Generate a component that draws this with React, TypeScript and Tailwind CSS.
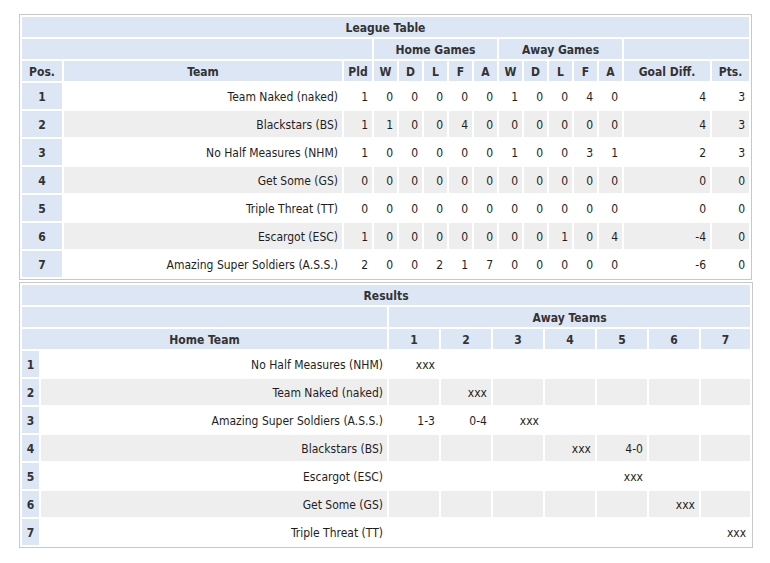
import React from "react";

const leagueRows = [
  { pos: 1, team: "Team Naked (naked)", pld: 1, home: [0, 0, 0, 0, 0], away: [1, 0, 0, 4, 0], gd: 4, pts: 3 },
  { pos: 2, team: "Blackstars (BS)", pld: 1, home: [1, 0, 0, 4, 0], away: [0, 0, 0, 0, 0], gd: 4, pts: 3 },
  { pos: 3, team: "No Half Measures (NHM)", pld: 1, home: [0, 0, 0, 0, 0], away: [1, 0, 0, 3, 1], gd: 2, pts: 3 },
  { pos: 4, team: "Get Some (GS)", pld: 0, home: [0, 0, 0, 0, 0], away: [0, 0, 0, 0, 0], gd: 0, pts: 0 },
  { pos: 5, team: "Triple Threat (TT)", pld: 0, home: [0, 0, 0, 0, 0], away: [0, 0, 0, 0, 0], gd: 0, pts: 0 },
  { pos: 6, team: "Escargot (ESC)", pld: 1, home: [0, 0, 0, 0, 0], away: [0, 0, 1, 0, 4], gd: -4, pts: 0 },
  { pos: 7, team: "Amazing Super Soldiers (A.S.S.)", pld: 2, home: [0, 0, 2, 1, 7], away: [0, 0, 0, 0, 0], gd: -6, pts: 0 },
];

const resultRows = [
  { pos: 1, team: "No Half Measures (NHM)", res: ["xxx", "", "", "", "", "", ""] },
  { pos: 2, team: "Team Naked (naked)", res: ["", "xxx", "", "", "", "", ""] },
  { pos: 3, team: "Amazing Super Soldiers (A.S.S.)", res: ["1-3", "0-4", "xxx", "", "", "", ""] },
  { pos: 4, team: "Blackstars (BS)", res: ["", "", "", "xxx", "4-0", "", ""] },
  { pos: 5, team: "Escargot (ESC)", res: ["", "", "", "", "xxx", "", ""] },
  { pos: 6, team: "Get Some (GS)", res: ["", "", "", "", "", "xxx", ""] },
  { pos: 7, team: "Triple Threat (TT)", res: ["", "", "", "", "", "", "xxx"] },
];

const statCols = ["W", "D", "L", "F", "A"];

const head = "bg-[#dde6f5] h-[20px] p-0 pt-[2px] text-center font-bold text-[#333]";
const cell = "h-[26px] p-0 pt-[2px] pr-[4px] text-right";
const pos = "h-[26px] bg-[#dde6f5] p-0 pt-[2px] text-center font-bold text-[#333]";

const App: React.FC = () => {
  return (
    <div className="min-h-screen bg-white pl-[19px] pt-[14px] font-['DejaVu_Sans_Condensed','DejaVu_Sans',sans-serif] text-[12px] leading-none text-[#1e1e1e]">
      {/* LEAGUE TABLE */}
      <table className="w-[733px] table-fixed border-separate border-spacing-[2px] border border-[#c8c8c8]">
        <colgroup>
          <col className="w-[40px]" />
          <col className="w-[278px]" />
          <col className="w-[28px]" />
          {[...statCols, ...statCols].map((c, i) => (
            <col key={i} className="w-[23px]" />
          ))}
          <col className="w-[86px]" />
          <col className="w-[37px]" />
        </colgroup>
        <thead>
          <tr>
            <th colSpan={15} className={head}>League Table</th>
          </tr>
          <tr>
            <th colSpan={3} className={head}></th>
            <th colSpan={5} className={head}>Home Games</th>
            <th colSpan={5} className={head}>Away Games</th>
            <th colSpan={2} className={head}></th>
          </tr>
          <tr>
            <th className={head}>Pos.</th>
            <th className={head}>Team</th>
            <th className={head}>Pld</th>
            {[...statCols, ...statCols].map((c, i) => (
              <th key={i} className={head}>{c}</th>
            ))}
            <th className={head}>Goal Diff.</th>
            <th className={head}>Pts.</th>
          </tr>
        </thead>
        <tbody>
          {leagueRows.map((r) => {
            const bg = r.pos % 2 === 0 ? "bg-[#eeeeee]" : "bg-white";
            return (
              <tr key={r.pos}>
                <td className={pos}>{r.pos}</td>
                <td className={`${cell} ${bg}`}>{r.team}</td>
                <td className={`${cell} ${bg}`}>{r.pld}</td>
                {[...r.home, ...r.away].map((v, i) => (
                  <td key={i} className={`${cell} ${bg}`}>{v}</td>
                ))}
                <td className={`${cell} ${bg}`}>{r.gd}</td>
                <td className={`${cell} ${bg}`}>{r.pts}</td>
              </tr>
            );
          })}
        </tbody>
      </table>

      {/* RESULTS */}
      <table className="mt-[2px] w-[733px] table-fixed border-separate border-spacing-[2px] border border-[#c8c8c8]">
        <colgroup>
          <col className="w-[17px]" />
          <col className="w-[346px]" />
          {[1, 2, 3, 4, 5, 6].map((n) => (
            <col key={n} className="w-[50px]" />
          ))}
          <col className="w-[49px]" />
        </colgroup>
        <thead>
          <tr>
            <th colSpan={9} className={head}>Results</th>
          </tr>
          <tr>
            <th colSpan={2} className={head}></th>
            <th colSpan={7} className={head}>Away Teams</th>
          </tr>
          <tr>
            <th colSpan={2} className={head}>Home Team</th>
            {[1, 2, 3, 4, 5, 6, 7].map((n) => (
              <th key={n} className={head}>{n}</th>
            ))}
          </tr>
        </thead>
        <tbody>
          {resultRows.map((r) => {
            const bg = r.pos % 2 === 0 ? "bg-[#eeeeee]" : "bg-white";
            return (
              <tr key={r.pos}>
                <td className={pos}>{r.pos}</td>
                <td className={`${cell} ${bg}`}>{r.team}</td>
                {r.res.map((v, i) => (
                  <td key={i} className={`${cell} ${bg}`}>{v}</td>
                ))}
              </tr>
            );
          })}
        </tbody>
      </table>
    </div>
  );
};

export default App;
